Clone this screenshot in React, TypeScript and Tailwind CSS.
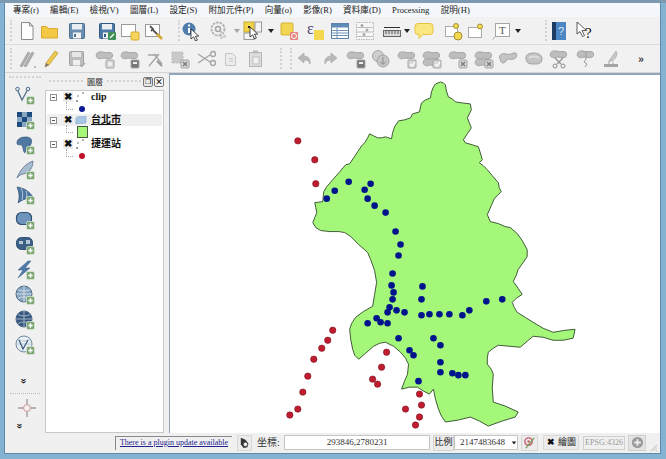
import type { ReactNode } from 'react'

const SERIF = "font-['Liberation_Serif','Noto_Sans_CJK_TC',serif]"

const OUTLINE =
  '314,203 322,202 323,192 326,187 332,180 339,172 345,165 349,164 353,158 357,152 361,146 364,143 367,138 369,134 373,136 377,138 381,138 385,137 391,139 392,133 394,127 398,121 404,120 410,118 412,114 419,112 420,107 421,103 425,100 430,98 431,92 433,87 435,84 440,82 443,83 445,85 446,91 448,97 452,99 455,102 462,103 470,104 471,110 469,114 467,118 469,123 471,128 467,134 463,140 465,143 472,145 478,147 480,153 482,160 479,163 483,166 487,170 492,176 498,183 499,188 501,192 497,196 494,199 491,206 487,215 490,222 498,224 505,227 510,228 517,234 522,241 527,250 527,257 523,263 518,270 516,276 513,282 518,289 522,295 516,299 512,303 514,308 517,313 525,318 533,323 543,329 553,333 565,331 575,330 574,335 573,339 563,341 553,341 543,338 533,337 527,342 520,348 509,347 498,346 493,349 488,353 487,359 487,365 491,370 493,375 492,389 493,403 505,407 518,413 515,418 502,422 488,427 479,422 470,418 458,421 445,423 441,417 438,410 435,400 433,390 429,395 423,392 417,388 409,388 401,390 404,382 407,375 408,365 405,359 400,353 393,347 385,343 379,344 373,347 365,354 358,360 354,356 352,350 350,340 349,330 351,324 355,318 363,312 372,307 374,295 376,283 374,271 370,260 367,253 358,245 350,237 344,233 338,232 329,232 320,231 315,228 312,223 314,218 316,213 315,208'

const BLUE = [
  [326, 199], [334, 191], [348, 182], [370, 184], [364, 190], [367, 199], [374, 206], [385, 213], [395, 232], [400, 245],
  [398, 256], [392, 274], [391, 286], [393, 293], [392, 300], [389, 308], [387, 313], [396, 311], [404, 313], [376, 319],
  [380, 323], [387, 324], [367, 324], [398, 339], [409, 351], [413, 356], [422, 287], [421, 300], [421, 316], [429, 315],
  [439, 315], [449, 315], [462, 316], [469, 311], [486, 302], [502, 300], [433, 339], [440, 346], [440, 363], [440, 373],
  [452, 374], [458, 376], [465, 376], [418, 382],
]

const RED = [
  [297, 141], [314, 160], [315, 184], [332, 331], [327, 341], [321, 349], [313, 360], [307, 377], [302, 393], [297, 410],
  [289, 416], [386, 353], [381, 368], [372, 380], [377, 385], [419, 395], [421, 406], [405, 410], [419, 418], [415, 426],
]

const MENU = ['專案(r)', '編輯(E)', '檢視(V)', '圖層(L)', '設定(S)', '附加元件(P)', '向量(o)', '影像(R)', '資料庫(D)', 'Processing', '說明(H)']

function Ic({ children, className = '' }: { children: ReactNode; className?: string }) {
  return (
    <svg viewBox="0 0 20 20" className={`h-[20px] w-[20px] shrink-0 ${className}`}>
      {children}
    </svg>
  )
}

function Cursor({ x = 9, y = 7 }: { x?: number; y?: number }) {
  return <path transform={`translate(${x} ${y})`} d="M0 0v10l2.6-2.2 2 4.2 1.8-.9-2-4h3.4z" fill="#fff" stroke="#222" strokeWidth=".8" />
}

function Plus() {
  return (
    <g>
      <rect x="11.5" y="11.5" width="8" height="8" rx="1.5" fill="#7ba571" stroke="#dfe8da" strokeWidth=".7" />
      <path d="M15.5 13.3v4.4M13.3 15.5h4.4" stroke="#fff" strokeWidth="1.4" />
    </g>
  )
}

function Arrow({ className = '' }: { className?: string }) {
  return <span className={`h-0 w-0 shrink-0 border-x-[3.5px] border-t-[4px] border-x-transparent border-t-[#222] ${className}`} />
}

function Sep({ className = '' }: { className?: string }) {
  return <span className={`my-[3px] w-[2px] shrink-0 self-stretch border-l-2 border-dotted border-[#d2d2d2] ${className}`} />
}

function Blob({ x = 0, y = 0 }: { x?: number; y?: number }) {
  return (
    <path
      transform={`translate(${x} ${y})`}
      d="M1.5 6.5C1 3.5 4 2.5 7 3s4 1 7 .5 4 2 3.500 4-3 2.500-6 2-3.500-.5-5 0-5 .5-5.500-3z"
      fill="#bdbdbd"
      stroke="#a5a5a5"
    />
  )
}

function Floppy({ color, body }: { color: string; body: string }) {
  return (
    <g>
      <rect x="2.500" y="2.500" width="15" height="15" rx="1" fill={color} stroke={body} />
      <rect x="5" y="3" width="10" height="5.500" fill="#e8edf2" />
      <rect x="6" y="11.500" width="8" height="6" fill="#f3f3f3" />
      <rect x="7" y="13" width="2" height="3" fill={body} />
    </g>
  )
}

function Page() {
  return <path d="M4.500 1.500h8l3.500 3.500v13.500h-11.500z M12.500 1.500v3.500h3.500" fill="#fff" stroke="#8b8b8b" />
}

function Frame() {
  return <rect x="1.500" y="3.500" width="14" height="12" fill="#fff" stroke="#9a9a9a" />
}

function GreyBadge({ mark }: { mark: 'star' | 'save' | 'check' | 'x' | 'down' }) {
  return (
    <g>
      <rect x="11" y="11" width="8" height="8" rx="1" fill={mark === 'save' ? '#777' : '#d6d6d6'} stroke="#a5a5a5" />
      {mark === 'x' && <path d="M13 13l4 4M17 13l-4 4" stroke="#777" strokeWidth="1.200" />}
      {mark === 'check' && <path d="M13 15l2 2 3-4" fill="none" stroke="#fff" strokeWidth="1.300" />}
      {mark === 'star' && <circle cx="15" cy="15" r="2" fill="#f2f2f2" />}
      {mark === 'save' && <rect x="13" y="13" width="4" height="2" fill="#eee" />}
    </g>
  )
}

function Globe({ dark = false }: { dark?: boolean }) {
  return (
    <g>
      <circle cx="9" cy="9" r="8" fill={dark ? '#38597f' : '#88a5c0'} stroke="#4c6a8a" />
      <path d="M1.500 9h15M9 1v16M3 4.500c4 2 8 2 12 0M3 13.500c4-2 8-2 12 0" fill="none" stroke={dark ? '#b8c8d8' : '#e4ecf2'} strokeWidth=".8" />
    </g>
  )
}

function TopToolbar() {
  return (
    <div className="flex h-[28px] shrink-0 items-center border-b border-[#dcdcdc] bg-[#f1f1f1]">
      <Sep className="ml-[5px]" />
      <Ic className="ml-[5px]"><Page /></Ic>
      <Ic className="ml-[3px]">
        <path d="M1.500 5.500v11.500h16v-9.500h-9l-2-2z" fill="#f2c845" stroke="#d9a935" />
      </Ic>
      <Ic className="ml-[7px]"><Floppy color="#6b8fb0" body="#4a6f92" /></Ic>
      <Ic className="ml-[10px]">
        <Floppy color="#4c79a5" body="#2f5a85" />
        <rect x="11" y="11" width="8" height="8" rx="1" fill="#3f8f57" />
        <path d="M13 17l4-4" stroke="#fff" strokeWidth="1.300" />
      </Ic>
      <Ic className="ml-[3px]">
        <Frame />
        <rect x="11" y="11" width="8" height="8" rx="1" fill="#f4d45c" stroke="#d5ae30" />
      </Ic>
      <Ic className="ml-[4px]">
        <Frame />
        <path d="M6 5l3 3-2 2M9 9l8 8" fill="none" stroke="#555" strokeWidth="1.800" />
        <path d="M13 13l5 5" stroke="#d9a935" strokeWidth="2.500" />
      </Ic>
      <Sep className="ml-[14px]" />
      <Ic className="ml-[1px]">
        <circle cx="8" cy="8" r="6.500" fill="#4f7cab" />
        <rect x="7" y="7" width="2" height="5" fill="#fff" />
        <rect x="7" y="3.500" width="2" height="2" fill="#fff" />
        <Cursor x={10} y={8} />
      </Ic>
      <Ic className="ml-[9px]">
        <circle cx="8" cy="8" r="6.500" fill="none" stroke="#b5b5b5" strokeWidth="2" strokeDasharray="2.500 1" />
        <circle cx="8" cy="8" r="2.500" fill="none" stroke="#a5a5a5" strokeWidth="1.500" />
        <path d="M11 10v8l2-2 3 0z" fill="#e6e6e6" stroke="#aaa" strokeWidth=".7" />
      </Ic>
      <Arrow className="ml-[4px] border-t-[#a5a5a5]" />
      <Ic className="ml-[3px]">
        <rect x="1" y="1" width="10" height="10" fill="#f1d44a" stroke="#c7a92c" />
        <rect x="5" y="5" width="2" height="2" fill="#222" />
        <rect x="12" y="1" width="6.500" height="10" fill="#f4f4f4" stroke="#999" />
        <rect x="1" y="12" width="10" height="6.500" fill="#f4f4f4" stroke="#999" />
        <Cursor x={7} y={6} />
      </Ic>
      <Arrow className="ml-[5px]" />
      <Ic className="ml-[5px]">
        <rect x="2" y="2" width="12" height="12" rx="1" fill="#f2d552" stroke="#d4b236" />
        <rect x="11" y="11" width="8" height="8" rx="1" fill="#e4867f" />
        <circle cx="15" cy="15" r="2.500" fill="none" stroke="#fff" />
      </Ic>
      <Ic className="ml-[6px]">
        <rect x="9" y="9" width="10" height="10" fill="#f4d84f" />
        <text x="2" y="13" fontSize="16" fill="#4a3f6e" fontFamily="Liberation Serif">ε</text>
      </Ic>
      <Ic className="ml-[5px]">
        <rect x="1.500" y="2.500" width="17" height="15" fill="#fff" stroke="#5d83aa" />
        <rect x="2" y="3" width="16" height="3.500" fill="#5e8bb8" />
        <path d="M7 6.500v10.500M2 9.500h16M2 12h16M2 14.500h16" stroke="#6e94ba" />
      </Ic>
      <Ic className="ml-[5px]">
        <rect x="1.500" y="1.500" width="17" height="17" fill="#f7f7f7" stroke="#b5b5b5" strokeDasharray="1.500 1" />
        <path d="M2 6.500h16M2 11h16M2 15.500h16" stroke="#bdbdbd" />
        <circle cx="7" cy="4.500" r="1.500" fill="#aaa" />
        <circle cx="12" cy="9" r="1.500" fill="#aaa" />
        <circle cx="9" cy="13.500" r="1.500" fill="#aaa" />
      </Ic>
      <Ic className="ml-[7px]">
        <path d="M2 6.500h16" stroke="#333" />
        <rect x="1.500" y="9.500" width="17" height="6" fill="#d9d9d9" stroke="#666" />
        <path d="M4 10v3M7 10v3M10 10v3M13 10v3M16 10v3" stroke="#555" />
      </Ic>
      <Arrow className="ml-[2px]" />
      <Ic className="ml-[4px]">
        <path d="M4 2.500h12a3 3 0 0 1 3 3v5a3 3 0 0 1-3 3H9l-4 4v-4H4a3 3 0 0 1-3-3v-5a3 3 0 0 1 3-3z" fill="#fbe77f" stroke="#e5c53e" />
      </Ic>
      <Ic className="ml-[10px]">
        <rect x="1.500" y="5.500" width="12" height="10" fill="#fff" stroke="#aaa" />
        <circle cx="12" cy="5" r="2.500" fill="#f3d954" stroke="#a48e2f" />
        <circle cx="14" cy="15" r="4" fill="#f3d954" stroke="#a48e2f" />
      </Ic>
      <Ic className="ml-[2px]">
        <rect x="2.500" y="6.500" width="13" height="10" fill="#fff" stroke="#aaa" />
        <circle cx="14" cy="5.500" r="2.500" fill="#f3d954" stroke="#a48e2f" />
      </Ic>
      <Ic className="ml-[5px]">
        <rect x="4.500" y="2.500" width="14" height="13" fill="#fff" stroke="#a5a5a5" />
        <text x="8" y="13" fontSize="11" fill="#555" fontFamily="Liberation Serif">T</text>
        <path d="M4.500 15.500l-3 3" stroke="#a5a5a5" />
      </Ic>
      <Arrow className="ml-[4px]" />
      <Sep className="ml-[24px]" />
      <Ic className="ml-[2px]">
        <rect x="3" y="1" width="14" height="18" fill="#4b86c4" />
        <rect x="3" y="1" width="4" height="18" fill="#1d3c64" />
        <text x="9" y="14" fontSize="11" fill="#dbe9f6" fontFamily="Liberation Sans">?</text>
      </Ic>
      <Ic className="ml-[6px]">
        <path d="M2 1v12l3-2.500 2.500 5 2-1-2.500-5h4.500z" fill="#fff" stroke="#333" strokeWidth=".8" />
        <text x="10" y="17" fontSize="15" fill="#111" fontFamily="Liberation Serif">?</text>
      </Ic>
    </div>
  )
}

function EditToolbar() {
  return (
    <div className="flex h-[28px] shrink-0 items-center border-b border-[#d5d5d5] bg-[#f1f1f1]">
      <Sep className="ml-[5px]" />
      <Ic className="ml-[5px]">
        <path d="M3 17L11 3l2 1-8 14zM7 17L15 3l2 1-8 14z" fill="#aeaeae" stroke="#979797" strokeWidth=".6" />
        <circle cx="18" cy="18" r=".8" fill="#777" />
      </Ic>
      <Ic className="ml-[4px]">
        <path d="M5 14L14 2l3 2-9 12-4 2z" fill="#eec94d" stroke="#b29432" strokeWidth=".7" />
        <path d="M4 18l1-4 3 2z" fill="#777" />
      </Ic>
      <Ic className="ml-[6px]">
        <rect x="2.500" y="2.500" width="14" height="14" rx="1" fill="#bdbdbd" stroke="#a3a3a3" />
        <rect x="5" y="3" width="9" height="5" fill="#e6e6e6" />
        <rect x="6" y="11" width="7" height="5.500" fill="#efefef" />
        <path d="M14 18l4-4" stroke="#aaa" strokeWidth="1.500" />
      </Ic>
      <Ic className="ml-[8px]"><Blob /><GreyBadge mark="star" /></Ic>
      <Ic className="ml-[5px]"><Blob /><GreyBadge mark="save" /></Ic>
      <Ic className="ml-[5px]">
        <path d="M4 17L14 5M9 5l8 10M3 6h10" fill="none" stroke="#a5a5a5" strokeWidth="1.300" />
        <path d="M12 12l5 5" stroke="#999" strokeWidth="2" />
      </Ic>
      <Ic className="ml-[5px]">
        <rect x="2" y="3" width="11" height="11" fill="#c9c9c9" stroke="#bbb" strokeDasharray="2 1" />
        <GreyBadge mark="x" />
      </Ic>
      <Ic className="ml-[7px]">
        <path d="M1 5l12 8M1 14l12-8" stroke="#a3a3a3" strokeWidth="1.200" />
        <circle cx="16" cy="5" r="2.500" fill="none" stroke="#a3a3a3" strokeWidth="1.300" />
        <circle cx="16" cy="14" r="2.500" fill="none" stroke="#a3a3a3" strokeWidth="1.300" />
      </Ic>
      <Ic className="ml-[4px]">
        <path d="M4.500 4.500h7l3 3v9h-10z" fill="#ececec" stroke="#c4c4c4" />
        <path d="M8 9.500h4M8 12h4" stroke="#c4c4c4" />
      </Ic>
      <Ic className="ml-[5px]">
        <rect x="3.500" y="3.500" width="12" height="14" fill="#dedede" stroke="#b5b5b5" />
        <rect x="7" y="1.500" width="5" height="3" fill="#bbb" />
        <rect x="7" y="8" width="6" height="7" fill="#f1f1f1" stroke="#c0c0c0" />
      </Ic>
      <Sep className="ml-[14px]" />
      <Sep className="ml-[8px]" />
      <Ic className="ml-[3px]">
        <path d="M9 4L3 9l6 5v-3c3 0 5 1 6 4 1-5-2-8-6-8z" fill="#b8b8b8" stroke="#a5a5a5" strokeWidth=".6" />
      </Ic>
      <Ic className="ml-[5px]">
        <path d="M11 4l6 5-6 5v-3c-3 0-5 1-6 4-1-5 2-8 6-8z" fill="#b8b8b8" stroke="#a5a5a5" strokeWidth=".6" />
      </Ic>
      <Ic className="ml-[6px]"><Blob /><GreyBadge mark="save" /></Ic>
      <Ic className="ml-[5px]">
        <circle cx="7" cy="7" r="5.500" fill="#cfcfcf" stroke="#a5a5a5" />
        <circle cx="12" cy="12" r="6" fill="#c5c5c5" stroke="#a5a5a5" />
        <path d="M12 8v7M9.500 13l2.500 2.500 2.500-2.500" fill="none" stroke="#8f8f8f" />
      </Ic>
      <Ic className="ml-[6px]"><Blob /><GreyBadge mark="check" /></Ic>
      <Ic className="ml-[5px]"><Blob /><Blob y={7} /><GreyBadge mark="check" /></Ic>
      <Ic className="ml-[6px]"><Blob /><GreyBadge mark="x" /></Ic>
      <Ic className="ml-[6px]"><Blob /><Blob y={7} /><GreyBadge mark="x" /></Ic>
      <Ic className="ml-[4px]">
        <path d="M1.500 9C1 5 5 4 8 5s5 0 8-1 3.500 3 1.500 5-5 1-7 1-3 4-5 4-3.500-2-3.500-5z" fill="#c4c4c4" stroke="#a3a3a3" />
      </Ic>
      <Ic className="ml-[6px]">
        <path d="M2 10c-1-4 3-6 7-6s9 1 9 6-4 5-8 5-7 0-8-5z" fill="#c4c4c4" stroke="#a3a3a3" />
        <path d="M5 9c2-2 8-2 10 0" fill="none" stroke="#dedede" strokeWidth="2" />
      </Ic>
      <Ic className="ml-[5px]">
        <Blob y={-1} />
        <path d="M6 9l6 6M14 9l-6 6" stroke="#8f8f8f" strokeWidth="1.200" />
        <circle cx="6" cy="17" r="2" fill="none" stroke="#8f8f8f" />
        <circle cx="14" cy="17" r="2" fill="none" stroke="#8f8f8f" />
      </Ic>
      <Ic className="ml-[7px]">
        <Blob y={-1} />
        <path d="M10 2v8l-2 3 3 2-2 3" fill="none" stroke="#999" />
      </Ic>
      <Ic className="ml-[5px]">
        <path d="M8 12L15 2c2 3 0 8-4 10z" fill="#c9c9c9" stroke="#a5a5a5" strokeWidth=".7" />
        <rect x="3" y="15" width="14" height="3" fill="#a5a5a5" />
        <path d="M8 15v-3M12 15v-2" stroke="#a5a5a5" />
      </Ic>
      <span className="ml-[17px] w-[8px] text-[11px] font-bold leading-none text-[#333]">»</span>
    </div>
  )
}

function SideToolbar() {
  return (
    <div className="flex w-[40px] shrink-0 flex-col">
      <div className="mx-[4px] mt-[3px] h-[2px] border-t-2 border-dotted border-[#d2d2d2]" />
      <div className="mt-[7px] flex flex-col items-center gap-[5px]">
        <Ic>
          <path d="M2 4l5 11 6-11" fill="none" stroke="#55708c" strokeWidth="1.300" />
          <circle cx="2.500" cy="4" r="1.800" fill="#dfe6ec" stroke="#55708c" />
          <circle cx="13" cy="4" r="1.800" fill="#dfe6ec" stroke="#55708c" />
          <Plus />
        </Ic>
        <Ic>
          <path d="M2 2h5v5H2zM12 2h5v5h-5zM7 7h5v5H7zM2 12h5v5H2z" fill="#1e4c7e" />
          <path d="M7 2h5v5H7zM2 7h5v5H2zM12 7h5v5h-5zM7 12h5v5H7z" fill="#8aa6c2" />
          <Plus />
        </Ic>
        <Ic>
          <path d="M2 8c0-5 5-6 9-6s7 2 5 7-4 2-5 6-2 4-3-2-6-1-6-5z" fill="#4f78a3" stroke="#35587d" strokeWidth=".7" />
          <Plus />
        </Ic>
        <Ic>
          <path d="M2 18C5 10 10 4 18 1c0 6-3 12-10 13l-3 1z" fill="#a9bdd0" stroke="#55708c" strokeWidth=".8" />
          <Plus />
        </Ic>
        <Ic>
          <path d="M2 2c7 1 12 4 16 10-5 1-10 2-15 6 2-6 1-11-1-16z" fill="#4c76a1" stroke="#2f5277" strokeWidth=".7" />
          <path d="M6 3c2 3 2 8 1 12M11 6c1 2 1 5 0 7" stroke="#cfdbe6" fill="none" strokeWidth=".8" />
          <Plus />
        </Ic>
        <Ic>
          <rect x="1.500" y="2.500" width="15" height="12" rx="5" fill="#6e94bb" stroke="#2e4f73" strokeWidth="1.200" />
          <Plus />
        </Ic>
        <Ic>
          <rect x="1.500" y="2.500" width="16" height="12" rx="5" fill="#3c5f86" stroke="#2e4f73" />
          <path d="M4 6h4v3H4zM11 5h4v4h-4z" fill="#b5c6d7" />
          <Plus />
        </Ic>
        <Ic>
          <path d="M13 1L3 10h5l-5 8 12-10h-5l6-7z" fill="#4e79a8" stroke="#3a6088" strokeWidth=".5" />
          <Plus />
        </Ic>
        <Ic><Globe /><Plus /></Ic>
        <Ic><Globe dark /><Plus /></Ic>
        <Ic>
          <circle cx="9" cy="9" r="8" fill="#e9eef3" stroke="#6d88a3" />
          <path d="M2 9h14M3 4.500c4 2 8 2 12 0" fill="none" stroke="#b1c1d1" strokeWidth=".8" />
          <path d="M4 5l4 9 5-9" fill="none" stroke="#3f5f80" strokeWidth="1.300" />
          <Plus />
        </Ic>
      </div>
      <span className="ml-[15px] mt-[21px] block w-[10px] rotate-90 text-center text-[11px] font-bold leading-[10px] text-[#111]">»</span>
      <div className="mx-[5px] mt-[7px] h-[1px] border-t border-dotted border-[#b8b8b8]" />
      <Ic className="ml-[12px] mt-[4px]">
        <path d="M10 1v18M1 10h18" stroke="#a29a9a" strokeWidth="1.300" />
        <circle cx="10" cy="10" r="3.500" fill="#f4ecec" stroke="#c99" />
      </Ic>
      <span className="ml-[11px] mt-[3px] block w-[10px] rotate-90 text-center text-[11px] font-bold leading-[10px] text-[#111]">»</span>
    </div>
  )
}

function TreeToggle() {
  return (
    <span className="flex h-[7px] w-[7px] shrink-0 items-center justify-center border border-[#8f8f8f] bg-white">
      <span className="h-[1px] w-[3px] bg-[#555]" />
    </span>
  )
}

function TreeCheck() {
  return (
    <span className="ml-[6px] flex h-[10px] w-[10px] shrink-0 items-center justify-center bg-[#ececec] text-[10px] font-black leading-none text-[#111]">
      ✖
    </span>
  )
}

function PointsIcon() {
  return (
    <svg viewBox="0 0 12 12" className="ml-[2px] h-[12px] w-[12px] shrink-0">
      <circle cx="8" cy="2" r="1" fill="#999" />
      <circle cx="3" cy="5" r="1" fill="#aaa" />
      <circle cx="2" cy="10" r="1" fill="#777" />
    </svg>
  )
}

function ChildRow({ children, className = '' }: { children: ReactNode; className?: string }) {
  return (
    <div className={`flex items-center pl-[19px] ${className}`}>
      <span className="mb-[6px] h-[8px] w-[7px] shrink-0 border-b border-l border-dotted border-[#aaa]" />
      <span className="ml-[2px] flex w-[14px] items-center justify-center">{children}</span>
    </div>
  )
}

function LayerPanel() {
  return (
    <div className="flex w-[124px] shrink-0 flex-col">
      <div className="flex h-[17px] shrink-0 items-center pl-[4px] pr-[5px]">
        <span className="h-[3px] flex-1 border-t-2 border-dotted border-[#d2d2d2]" />
        <span className="mx-[4px] text-[8px] leading-none text-[#222]">圖層</span>
        <span className="h-[3px] flex-1 border-t-2 border-dotted border-[#d2d2d2]" />
        <span className="ml-[2px] flex h-[10px] w-[10px] items-center justify-center rounded-[2px] border border-[#777] bg-[#e9e9e9] text-[7px] leading-none">❐</span>
        <span className="ml-[1px] flex h-[10px] w-[10px] items-center justify-center rounded-[2px] border border-[#777] bg-[#f7f7f7] text-[8px] font-bold leading-none">×</span>
      </div>
      <div className={`mr-[5px] min-h-0 flex-1 border border-[#c8c8c8] bg-white pl-[1px] pr-[1px] text-[10px] font-bold text-[#111] ${SERIF}`}>
        <div className="flex h-[12px] items-center pl-[3px]">
          <TreeToggle />
          <TreeCheck />
          <PointsIcon />
          <span className="ml-[4px] leading-none">clip</span>
        </div>
        <ChildRow className="h-[11px]">
          <span className="h-[6px] w-[6px] rounded-full bg-[#0a1a96]" />
        </ChildRow>
        <div className="flex h-[12px] items-center bg-[#f0f0f0] pl-[3px]">
          <TreeToggle />
          <TreeCheck />
          <svg viewBox="0 0 12 10" className="ml-[2px] h-[10px] w-[12px] shrink-0">
            <path d="M1 3c3-3 6 0 10-2v7c-4 1-7 0-10 1z" fill="#a8c6e6" stroke="#7f9fc0" strokeWidth=".6" />
          </svg>
          <span className="ml-[4px] leading-none underline">台北市</span>
        </div>
        <ChildRow className="h-[12px]">
          <span className="h-[12px] w-[11px] border border-[#4a5a40] bg-[#a5f77a]" />
        </ChildRow>
        <div className="flex h-[12px] items-center pl-[3px]">
          <TreeToggle />
          <TreeCheck />
          <PointsIcon />
          <span className="ml-[4px] leading-none">捷運站</span>
        </div>
        <ChildRow className="h-[11px]">
          <span className="h-[6px] w-[6px] rounded-full bg-[#c01028]" />
        </ChildRow>
      </div>
    </div>
  )
}

function MapCanvas() {
  return (
    <div className="min-w-0 flex-1 border-l border-t-2 border-[#8ea5bb] bg-white">
      <svg viewBox="169 75 491 359" className="block h-full w-full">
        <polygon points={OUTLINE} fill="#a5f77a" stroke="#3f5a38" strokeWidth="1" />
        {BLUE.map(([x, y]) => (
          <circle key={`b${x}-${y}`} cx={x} cy={y} r="3.300" fill="#00148c" />
        ))}
        {RED.map(([x, y]) => (
          <circle key={`r${x}-${y}`} cx={x} cy={y} r="3.200" fill="#c01c30" stroke="#7a1420" strokeWidth=".6" />
        ))}
      </svg>
    </div>
  )
}

function StatusBar() {
  return (
    <div className={`flex h-[20px] shrink-0 items-center bg-[#f0f0f0] pb-[1px] pl-[110px] text-[9px] text-[#222] ${SERIF}`}>
      <a className="flex h-[14px] w-[117px] shrink-0 items-center justify-center border-l border-t border-[#8a8a8a] text-[8px] text-[#23238e] underline">
        There is a plugin update available
      </a>
      <span className="ml-[5px] flex h-[16px] w-[15px] shrink-0 items-center justify-center border border-[#d8d8d8] bg-[#ececec]">
        <svg viewBox="0 0 14 14" className="h-[13px] w-[13px]">
          <path d="M3 2l5 2 3 4-1 4-4 1-3-4z" fill="#333" />
          <circle cx="8" cy="9" r="2.500" fill="#eee" stroke="#333" />
        </svg>
      </span>
      <span className="ml-[5px] w-[27px] shrink-0 text-[10px] leading-none text-[#333]">坐標:</span>
      <span className="flex h-[15px] w-[146px] shrink-0 items-center justify-center border border-[#c5c5c5] bg-white leading-none text-[#333]">293846,2780231</span>
      <span className="ml-[3px] flex h-[16px] w-[21px] shrink-0 items-center justify-center whitespace-nowrap border border-[#d4d4d4] bg-[#ebebeb] text-[9px] leading-none">比例</span>
      <span className="flex h-[15px] w-[64px] shrink-0 items-center overflow-hidden border border-[#c5c5c5] bg-white pl-[5px] leading-none text-[#333]">
        2147483648
        <Arrow className="ml-[6px] scale-75" />
      </span>
      <span className="ml-[3px] flex h-[16px] w-[17px] shrink-0 items-center justify-center border border-[#d8d8d8] bg-[#ececec]">
        <svg viewBox="0 0 14 14" className="h-[13px] w-[13px]">
          <circle cx="6" cy="6" r="4" fill="none" stroke="#c75b6b" strokeWidth="1.500" />
          <circle cx="6" cy="6" r="1.300" fill="#c75b6b" />
          <path d="M3 13L12 2" stroke="#7c9e62" strokeWidth="1.500" />
        </svg>
      </span>
      <span className="ml-[5px] flex h-[15px] w-[36px] shrink-0 items-center border border-[#d8d8d8] bg-[#ececec] pl-[3px] text-[9px] leading-none">
        <span className="font-black text-[#111]">✖</span>
        <span className="ml-[3px] text-[9px]">繪圖</span>
      </span>
      <span className="ml-[4px] flex h-[14px] w-[42px] shrink-0 items-center justify-center border border-[#cfcfcf] text-[8px] leading-none text-[#9a9a9a]">EPSG:4326</span>
      <span className="ml-[3px] flex h-[16px] w-[18px] shrink-0 items-center justify-center border border-[#cfcfcf] bg-[#e4e4e4]">
        <svg viewBox="0 0 14 14" className="h-[13px] w-[13px]">
          <circle cx="7" cy="7" r="6" fill="#9a9a9a" />
          <path d="M7 3.500v7M3.500 7h7" stroke="#eee" strokeWidth="2" />
        </svg>
      </span>
      <svg viewBox="0 0 10 10" className="ml-[3px] mt-auto h-[9px] w-[9px]">
        <path d="M9 2L2 9M9 5L5 9M9 8L8 9" stroke="#b5b5b5" />
      </svg>
    </div>
  )
}

export default function App() {
  return (
    <div className="flex h-[459px] w-[666px] flex-col overflow-hidden border-t-[3px] border-[#7c99b0] bg-[#83b2d2] pb-[5px] pl-[4px] pr-[5px] font-['Noto_Sans_CJK_TC',sans-serif]">
      <div className="flex min-h-0 flex-1 flex-col border-b border-l border-r border-[#5f8aa8] bg-[#f0f0f0]">
        <div className={`flex h-[14px] shrink-0 items-center gap-[11.300px] bg-[#f4f7fb] pl-[8px] text-[8.600px] leading-none text-[#222] ${SERIF}`}>
          {MENU.map((m) => (
            <span key={m}>{m}</span>
          ))}
        </div>
        <TopToolbar />
        <EditToolbar />
        <div className="flex min-h-0 flex-1">
          <SideToolbar />
          <LayerPanel />
          <MapCanvas />
        </div>
        <StatusBar />
      </div>
    </div>
  )
}
